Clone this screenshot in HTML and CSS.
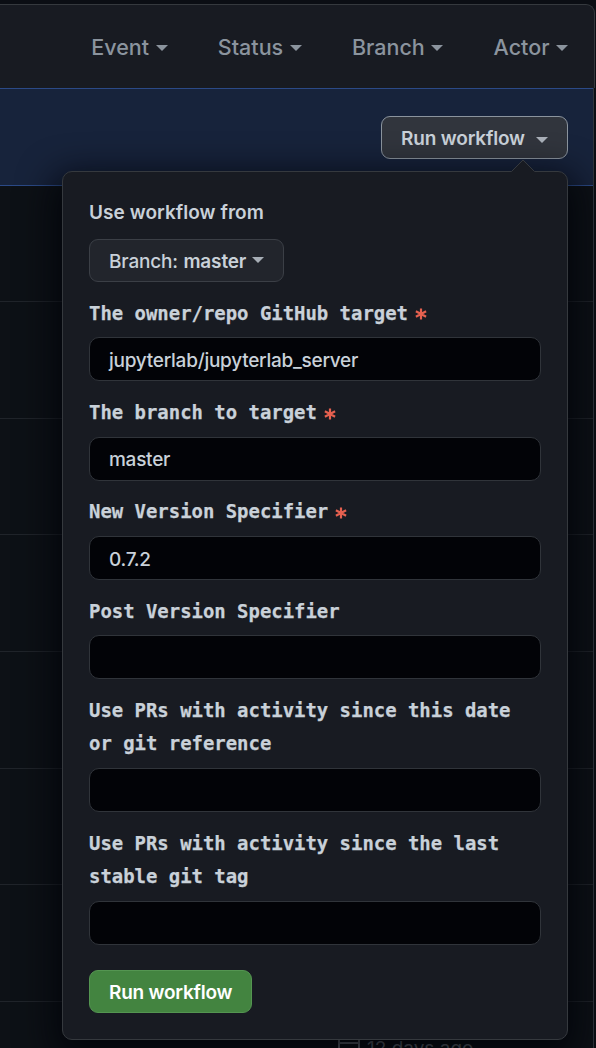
FILE: index.html
```html
<!DOCTYPE html>
<html lang="en">
<head>
<meta charset="utf-8">
<title>Run workflow</title>
<link rel="stylesheet" href="styles.css">
</head>
<body>
<main class="page">
  <header class="filters">
    <span class="filter event"><span class="t">Event</span><i class="caret"></i></span>
    <span class="filter status"><span class="t">Status</span><i class="caret"></i></span>
    <span class="filter branch"><span class="t">Branch</span><i class="caret"></i></span>
    <span class="filter actor"><span class="t">Actor</span><i class="caret"></i></span>
  </header>
  <div class="runs">
    <section class="dispatch">
      <button class="btn btn-open"><span>Run workflow</span><i class="caret"></i></button>
    </section>
    <div class="row"></div><div class="row"></div><div class="row"></div><div class="row"></div>
    <div class="row"></div><div class="row"></div><div class="row"></div>
    <div class="row last">
      <svg class="calendar" width="24" height="24" viewBox="0 0 24 24" fill="none" stroke="currentColor" stroke-width="2"><path d="M2 0V22H22V0M2 6H22"/></svg>
      <span>12 days ago</span>
    </div>
  </div>
  <form class="popover">
    <svg class="arrow" width="24" height="13" viewBox="0 0 24 13"><path class="arrow-fill" d="M0 13L12 1L24 13Z"/><path class="arrow-line" d="M.5 12.5L12 1L23.5 12.5"/></svg>
    <div class="title">Use workflow from</div>
    <button type="button" class="btn btn-branch"><span class="thin">Branch:</span><span class="name">master</span><i class="caret"></i></button>
    <label class="field"><span class="label">The owner/repo GitHub target<svg class="req" viewBox="0 0 12 12"><path d="M6 .4V11.6M.9 3.2L11.1 8.8M.9 8.8L11.1 3.2"/></svg></span><span class="input v1"><span>jupyterlab/jupyterlab_server</span></span></label>
    <label class="field"><span class="label">The branch to target<svg class="req" viewBox="0 0 12 12"><path d="M6 .4V11.6M.9 3.2L11.1 8.8M.9 8.8L11.1 3.2"/></svg></span><span class="input"><span>master</span></span></label>
    <label class="field"><span class="label">New Version Specifier<svg class="req" viewBox="0 0 12 12"><path d="M6 .4V11.6M.9 3.2L11.1 8.8M.9 8.8L11.1 3.2"/></svg></span><span class="input v3"><span>0.7.2</span></span></label>
    <label class="field"><span class="label">Post Version Specifier</span><span class="input"></span></label>
    <label class="field"><span class="label">Use PRs with activity since this date<br>or git reference</span><span class="input"></span></label>
    <label class="field"><span class="label">Use PRs with activity since the last<br>stable git tag</span><span class="input"></span></label>
    <button type="button" class="btn btn-run">Run workflow</button>
  </form>
</main>
</body>
</html>
```

FILE: styles.css
```css
* { box-sizing: border-box; }
body { margin: 0; background: #06090f; font-family: Inter, "Liberation Sans", sans-serif; color: #c9d1d9; }
.page { position: relative; width: 596px; height: 1048px; overflow: hidden; padding-top: 4px; background: #0b0e14; }
.filters {
  display: flex; align-items: center; justify-content: flex-end; gap: 50.3px;
  width: 595px; height: 84px; padding: 0 26px 0 0;
  background: #181b22; border: 1px solid #35393e; border-width: 1px 1px 0 0; border-top-right-radius: 9px;
  font-size: 21.5px; font-weight: 450; color: #8b949e;
}
.filter { display: flex; align-items: center; gap: 6.5px; }
.caret { width: 0; height: 0; border: 6px solid transparent; border-top-color: currentColor; border-bottom: 0; margin-top: 3px; }
.runs { width: 594px; height: 960px; border-right: 1px solid #30363d; background: #0d1116; }
.dispatch {
  display: flex; align-items: flex-start; justify-content: flex-end; height: 98px; padding: 27px 25px 0 0;
  background: #17233b; border: 1px solid #2b4a87; border-width: 1px 0;
}
.row { height: 116.6px; border-bottom: 1px solid #20242a; }
.dispatch + .row { height: 116.2px; }
.last { display: flex; gap: 6px; padding: 35.6px 0 0 337px; border: 0; color: #858c95; font-size: 19px; line-height: 24px; }
.calendar { flex: none; }
.btn {
  display: flex; align-items: center; height: 43px; padding: 2px 19px 0; border: 1px solid #3b3f46; border-radius: 9px;
  font-family: inherit; font-size: 19px; font-weight: 600; letter-spacing: -.17px; line-height: 28px; color: #c9d1d9; background: #22252c; white-space: nowrap;
}
.btn-open { width: 187px; gap: 11.5px; border-color: #8b949e; background: #31353d; }
.btn-open .caret { opacity: .8; }
.btn-branch { width: 195px; margin-top: 9px; gap: 5.5px; }
.btn-branch .caret { margin-top: -3px; opacity: .8; }
.thin { font-weight: 450; }
.btn-run { width: 163px; margin-top: 25px; padding-top: 3px; background: #438440; border-color: #549551; color: #fff; letter-spacing: -.22px; }
.popover {
  position: absolute; left: 62px; top: 171px; width: 506px; height: 869px; padding: 26px 26px 0;
  background: #181b22; border: 1px solid #35393e; border-radius: 10px; box-shadow: 0 12px 36px 8px #010409d9;
}
.arrow { position: absolute; right: 32px; top: -13px; }
.arrow-fill { fill: #181b22; }
.arrow-line { fill: none; stroke: #35393e; }
.title { height: 32px; line-height: 29px; font-size: 19px; font-weight: 600; letter-spacing: .06px; }
.field { display: block; margin-top: 14.3px; }
.label { display: block; padding-top: .5px; font: bold 18.93px/33.3px "DejaVu Sans Mono", monospace; white-space: nowrap; -webkit-text-stroke: .25px currentColor; }
.req { width: 12px; height: 12px; margin: 0 0 -.4px 7px; fill: none; stroke: #e5604f; stroke-width: 2.2; }
.input {
  display: flex; align-items: center; height: 44px; margin-top: 7.25px; padding: 2px 19px 0;
  border: 1px solid #30343a; border-radius: 10px; background: #020307; font-size: 19px; font-weight: 450; letter-spacing: -.26px; color: #c9d1d9;
}
.v3 { padding-top: 3px; }
```
